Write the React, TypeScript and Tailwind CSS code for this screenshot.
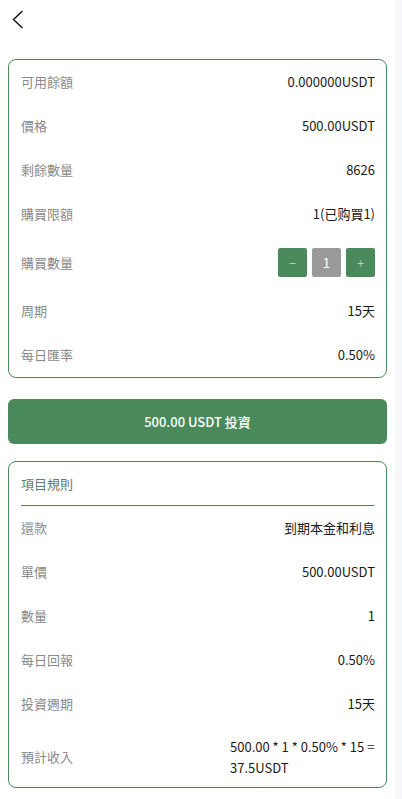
import React from "react";

const font = { fontFamily: '"Noto Sans CJK TC", "Noto Sans", sans-serif' };

function Row({ label, value }: { label: string; value: React.ReactNode }) {
  return (
    <div className="flex h-11 items-center justify-between pl-3 pr-[11px]">
      <span className="text-[13px] text-[#8a8a8a]">{label}</span>
      <span className="text-[13px] text-[#1a1a1a]">{value}</span>
    </div>
  );
}

export default function App() {
  return (
    <div className="flex min-h-[799px] w-full bg-white" style={font}>
      <div className="flex-1">
        <div className="pl-[12px] pt-[10px]">
          <svg width="12" height="19" viewBox="0 0 12 19" fill="none">
            <path d="M10.5 1 L1.5 9.5 L10.5 18" stroke="#111" strokeWidth="1.4" />
          </svg>
        </div>
        <div className="mx-2 mt-[30px] rounded-lg border border-[#4a8a5a]">
          <Row label="可用餘額" value="0.000000USDT" />
          <Row label="價格" value="500.00USDT" />
          <Row label="剩餘數量" value="8626" />
          <Row label="購買限額" value="1(已购買1)" />
          <div className="flex h-[53px] items-center justify-between pl-3 pr-[11px]">
            <span className="text-[13px] text-[#8a8a8a]">購買數量</span>
            <div className="flex gap-[5px]">
              <button className="flex h-[29px] w-[29px] items-center justify-center rounded-[2px] bg-[#4a8a5a] text-[13px] text-[#b6cfbd]">
                −
              </button>
              <div className="flex h-[29px] w-[29px] items-center justify-center rounded-[2px] bg-[#9a9a9a] text-[14px] text-white">
                1
              </div>
              <button className="flex h-[29px] w-[29px] items-center justify-center rounded-[2px] bg-[#4a8a5a] text-[13px] text-[#b6cfbd]">
                +
              </button>
            </div>
          </div>
          <Row label="周期" value="15天" />
          <Row label="每日匯率" value="0.50%" />
        </div>
        <button className="mx-2 mt-[21px] flex h-[45px] w-[calc(100%-16px)] items-center justify-center rounded-md bg-[#4a8a5a] text-[13px] font-medium text-white">
          500.00 USDT 投資
        </button>
        <div className="mx-2 mt-[17px] rounded-lg border border-[#4a8a5a]">
          <div className="px-3">
            <div className="flex h-[44px] items-center border-b border-[#4a8a5a] text-[13px] text-[#5e7d74]">
              項目規則
            </div>
          </div>
          <Row label="還款" value="到期本金和利息" />
          <Row label="單價" value="500.00USDT" />
          <Row label="數量" value="1" />
          <Row label="每日回報" value="0.50%" />
          <Row label="投資週期" value="15天" />
          <div className="flex h-[61px] items-center justify-between pl-3 pr-[11px]">
            <span className="text-[13px] text-[#8a8a8a]">預計收入</span>
            <span className="max-w-[145px] text-left text-[13px] leading-[21px] text-[#1a1a1a]">
              500.00 * 1 * 0.50% * 15 = 37.5USDT
            </span>
          </div>
        </div>
      </div>
      <div className="w-[7px] bg-[#f7f8fc]" />
    </div>
  );
}
